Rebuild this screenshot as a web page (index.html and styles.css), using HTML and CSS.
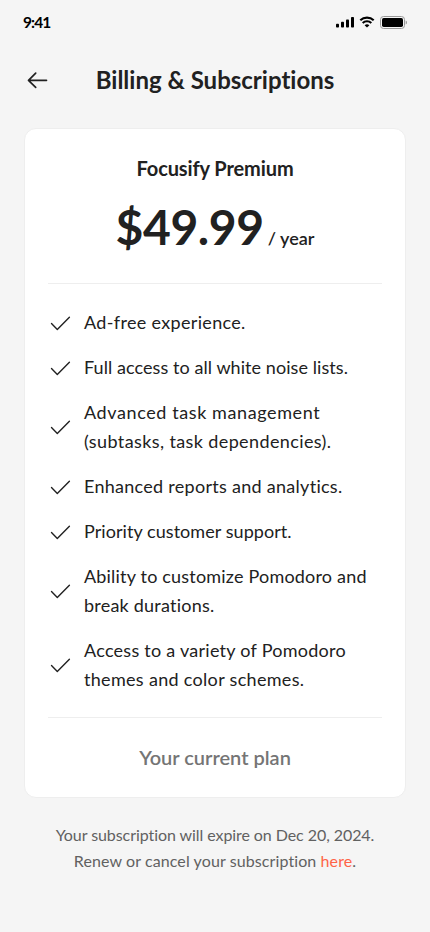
FILE: index.html
```html
<!DOCTYPE html>
<html lang="en">
<head>
<meta charset="utf-8">
<meta name="viewport" content="width=device-width, initial-scale=1">
<title>Billing &amp; Subscriptions</title>
<link rel="stylesheet" href="styles.css">
</head>
<body>
<svg class="defs" aria-hidden="true"><symbol id="check" viewBox="0 0 24 24"><path d="M3.500 12.600 9.300 18.400 21.400 6.300"/></symbol></svg>
<div class="status">
  <span class="time">9:41</span>
  <div class="indicators">
    <svg class="signal" viewBox="0 0 18 12"><rect x="0" y="7.7" width="3" height="3.8" rx=".8"/><rect x="5" y="5.7" width="3" height="5.8" rx=".8"/><rect x="10" y="3.5" width="3" height="8" rx=".8"/><rect x="15" y="1" width="3" height="10.500" rx=".8"/></svg>
    <svg class="wifi" viewBox="0 0 16 12"><path d="M1.300 4.300A9.700 9.700 0 0 1 14.700 4.300M3.700 7A6.200 6.200 0 0 1 12.300 7"/><path class="dot" d="M5.600 9.200Q8 7.300 10.400 9.200L8 11.600Z"/></svg>
    <svg class="battery" viewBox="0 0 27 13"><rect class="shell" x=".5" y=".5" width="24" height="12" rx="3"/><rect x="2" y="2" width="21" height="9" rx="1.700"/><path class="cap" d="M25.700 4.500Q27 5 27 6.500T25.700 8.500Z"/></svg>
  </div>
</div>
<header class="header">
  <svg class="back" viewBox="0 0 28 28"><path d="M22.500 14.300H4.700M11.700 7.200 4.500 14.300 11.700 21.400"/></svg>
  <h1>Billing &amp; Subscriptions</h1>
</header>
<main>
  <section class="card">
    <h2>Focusify Premium</h2>
    <div class="price"><span class="amount">$49.99</span><span class="period">/ year</span></div>
    <ul class="features">
      <li><svg class="check"><use href="#check"/></svg><p><span class="l1">Ad-free experience.</span></p></li>
      <li><svg class="check"><use href="#check"/></svg><p><span class="l2">Full access to all white noise lists.</span></p></li>
      <li><svg class="check"><use href="#check"/></svg><p><span class="l3">Advanced task management</span><br><span class="l4">(subtasks, task dependencies).</span></p></li>
      <li><svg class="check"><use href="#check"/></svg><p><span class="l5">Enhanced reports and analytics.</span></p></li>
      <li><svg class="check"><use href="#check"/></svg><p><span class="l6">Priority customer support.</span></p></li>
      <li><svg class="check"><use href="#check"/></svg><p><span class="l7">Ability to customize Pomodoro and</span><br><span class="l8">break durations.</span></p></li>
      <li><svg class="check"><use href="#check"/></svg><p><span class="l9">Access to a variety of Pomodoro</span><br><span class="l10">themes and color schemes.</span></p></li>
    </ul>
    <div class="current">Your current plan</div>
  </section>
  <p class="note"><span class="n1">Your subscription will expire on Dec 20, 2024.</span><br><span class="n2">Renew or cancel your subscription <a>here</a>.</span></p>
</main>
</body>
</html>
```

FILE: styles.css
```css
* { box-sizing: border-box; }
body { margin: 0; min-height: 932px; background: #f5f5f5; color: #212121; font-family: Lato, sans-serif; font-variant-ligatures: none; }
h1, h2, p, ul { margin: 0; padding: 0; }
.defs { display: none; }
.status { height: 44px; padding: 0 23px; display: flex; align-items: center; justify-content: space-between; color: #000; }
.time { font-size: 15.500px; font-weight: 700; letter-spacing: -.9px; }
.indicators { display: flex; align-items: center; gap: 5px; }
.signal { width: 18px; height: 12px; }
.wifi { width: 16px; height: 12px; }
.wifi path { fill: none; stroke: #000; stroke-width: 2.100; }
.wifi .dot { fill: #000; stroke: none; }
.battery { width: 27px; height: 13px; }
.battery .shell { fill: none; stroke: #999; }
.battery .cap { fill: #999; }
.header { height: 72px; padding: 0 24px; display: grid; grid-template-columns: 28px 1fr 28px; align-items: center; }
.back { width: 28px; height: 28px; fill: none; stroke: #212121; stroke-width: 1.700; stroke-linecap: round; stroke-linejoin: round; }
h1 { font-size: 24px; line-height: 38px; font-weight: 700; text-align: center; white-space: nowrap; }
main { padding: 12px 24px 0; }
.card { height: 670px; border: 1px solid #eee; border-radius: 12px; background: #fff; padding: 23px; }
h2 { font-size: 20px; line-height: 32px; font-weight: 700; text-align: center; letter-spacing: -.1px; }
.price { height: 99px; padding-top: 14px; display: flex; justify-content: center; align-items: baseline; gap: 4px; line-height: 58px; white-space: nowrap; }
.amount { font-size: 48px; font-weight: 700; letter-spacing: -.4px; }
.period { font-size: 18px; font-weight: 600; }
.features { list-style: none; border: solid #eee; border-width: 1px 0; padding: 24px 0 23px; display: grid; gap: 16px; }
.features li { display: grid; grid-template-columns: 24px 1fr; column-gap: 12px; align-items: center; font-size: 18px; line-height: 29px; white-space: nowrap; }
.check { width: 24px; height: 24px; fill: none; stroke: #212121; stroke-width: 1.400; stroke-linecap: round; stroke-linejoin: round; }
.l1 { letter-spacing: .33px; }
.l2 { letter-spacing: .07px; }
.l3 { letter-spacing: .6px; }
.l4 { letter-spacing: .39px; }
.l5 { letter-spacing: .28px; }
.l6 { letter-spacing: .06px; }
.l7 { letter-spacing: .19px; }
.l8 { letter-spacing: .22px; }
.l9 { letter-spacing: .26px; }
.l10 { letter-spacing: .31px; }
.current { margin-top: 23px; font-size: 20px; line-height: 32px; font-weight: 600; color: #757575; text-align: center; }
.note { margin-top: 24px; font-size: 16px; line-height: 26px; color: #616161; text-align: center; white-space: nowrap; }
.n1 { letter-spacing: -.07px; }
.n2 { letter-spacing: .1px; }
.note a { color: #ff6347; }
```
